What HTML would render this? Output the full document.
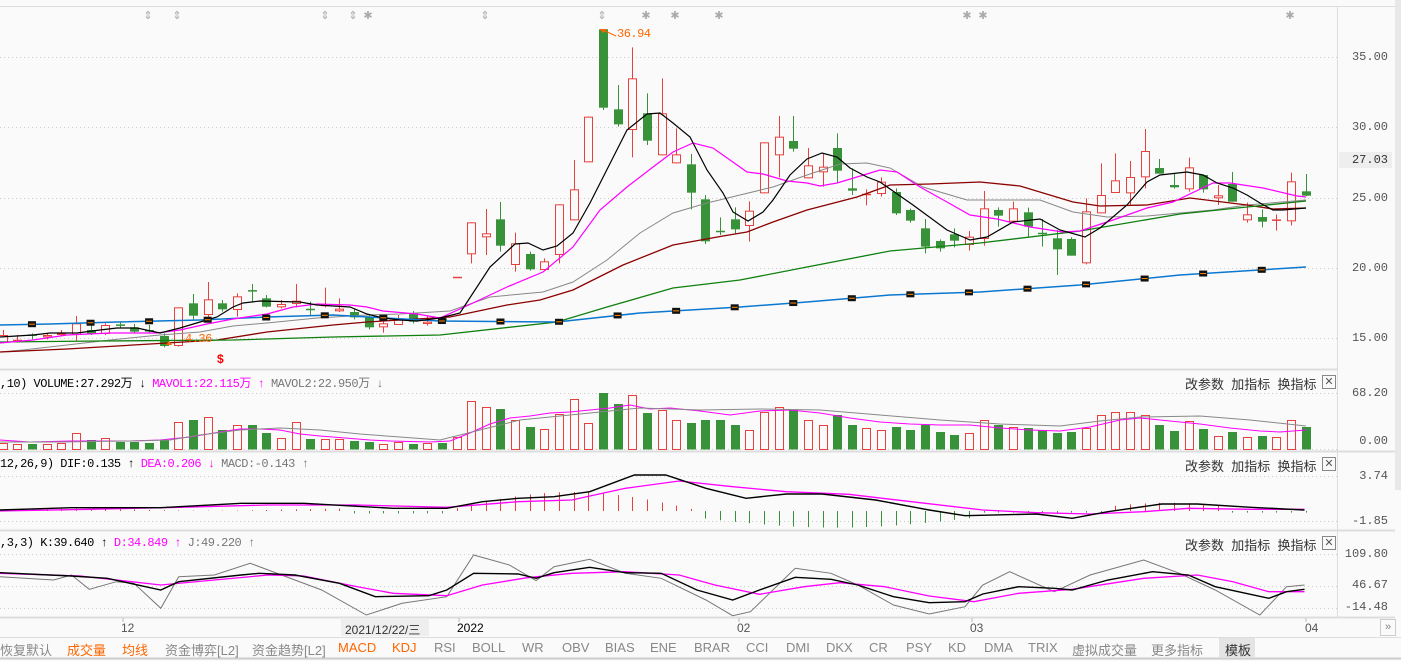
<!DOCTYPE html>
<html><head><meta charset="utf-8"><style>
html,body{margin:0;padding:0;background:#fafafa;width:1401px;height:661px;overflow:hidden;font-family:"Liberation Sans","Noto Sans CJK SC",sans-serif}
#c{position:absolute;left:0;top:0}
.t{position:absolute;white-space:nowrap;font-size:12px}
.mono{font-family:"Liberation Mono","Noto Sans CJK SC",monospace;font-size:12px;letter-spacing:-0.5px}
.btn{position:absolute;font-size:13px;color:#333;font-family:"Liberation Sans","Noto Sans CJK SC",sans-serif}
.x{position:absolute;width:12px;height:12px;border:1px solid #888;font-size:11px;line-height:12px;text-align:center;color:#555}
.ax{position:absolute;right:13px;font-family:"Liberation Mono",monospace;font-size:12px;color:#555;text-align:right}
.tab{position:absolute;top:640px;font-size:13px;color:#888}
</style></head><body>
<svg id="c" width="1401" height="661" xmlns="http://www.w3.org/2000/svg"></svg>

<div class="ax" style="top:50px">35.00</div>
<div class="ax" style="top:120px">30.00</div>
<div class="ax" style="top:191px">25.00</div>
<div class="ax" style="top:261px">20.00</div>
<div class="ax" style="top:331px">15.00</div>
<div style="position:absolute;left:1339px;top:152px;width:53px;height:16px;background:#eee"></div>
<div class="ax" style="top:153px;color:#333">27.03</div>
<div class="ax" style="top:386px">68.20</div>
<div class="ax" style="top:434px">0.00</div>
<div class="ax" style="top:469px">3.74</div>
<div class="ax" style="top:514px">-1.85</div>
<div class="ax" style="top:547px">109.80</div>
<div class="ax" style="top:578px">46.67</div>
<div class="ax" style="top:600px">-14.48</div>

<div class="t mono" style="left:0;top:374px;color:#000">,10) VOLUME:27.292万 ↓ <span style="color:#f0f">MAVOL1:22.115万 ↑</span> <span style="color:#777">MAVOL2:22.950万 ↓</span></div>
<div class="t mono" style="left:0;top:457px;color:#000">12,26,9) DIF:0.135 ↑ <span style="color:#f0f">DEA:0.206 ↓</span> <span style="color:#777">MACD:-0.143 ↑</span></div>
<div class="t mono" style="left:0;top:536px;color:#000">,3,3) K:39.640 ↑ <span style="color:#f0f">D:34.849 ↑</span> <span style="color:#777">J:49.220 ↑</span></div>

<div class="btn" style="left:1185px;top:374px">改参数&nbsp;&nbsp;加指标&nbsp;&nbsp;换指标</div><div class="x" style="left:1322px;top:375px">✕</div>
<div class="btn" style="left:1185px;top:456px">改参数&nbsp;&nbsp;加指标&nbsp;&nbsp;换指标</div><div class="x" style="left:1322px;top:457px">✕</div>
<div class="btn" style="left:1185px;top:535px">改参数&nbsp;&nbsp;加指标&nbsp;&nbsp;换指标</div><div class="x" style="left:1322px;top:536px">✕</div>

<div class="t mono" style="left:617px;top:27px;color:#f60;font-size:12px">36.94</div>
<div class="t mono" style="left:185px;top:332px;color:#f60">4.36</div>
<div class="t" style="left:217px;top:352px;color:#f00;font-weight:bold;font-size:12px">$</div>

<div class="t" style="left:121px;top:621px;color:#555">12</div>
<div style="position:absolute;left:341px;top:618px;width:88px;height:18px;background:#eee"></div>
<div class="t" style="left:345px;top:621px;color:#333">2021/12/22/三</div>
<div class="t" style="left:457px;top:621px;color:#000">2022</div>
<div class="t" style="left:737px;top:621px;color:#555">02</div>
<div class="t" style="left:970px;top:621px;color:#555">03</div>
<div class="t" style="left:1305px;top:621px;color:#555">04</div>
<div style="position:absolute;left:1380px;top:619px;width:14px;height:15px;border:1px solid #ccc;font-size:11px;color:#888;line-height:15px;text-align:center">»</div>

<div class="tab" style="left:0;color:#888">恢复默认</div>
<div class="tab" style="left:67px;color:#f60">成交量</div>
<div class="tab" style="left:122px;color:#f60">均线</div>
<div class="tab" style="left:165px">资金博弈[L2]</div>
<div class="tab" style="left:252px">资金趋势[L2]</div>
<div class="tab" style="left:338px;color:#f60">MACD</div>
<div class="tab" style="left:392px;color:#f60">KDJ</div>
<div class="tab" style="left:434px">RSI</div>
<div class="tab" style="left:472px">BOLL</div>
<div class="tab" style="left:522px">WR</div>
<div class="tab" style="left:562px">OBV</div>
<div class="tab" style="left:605px">BIAS</div>
<div class="tab" style="left:650px">ENE</div>
<div class="tab" style="left:694px">BRAR</div>
<div class="tab" style="left:746px">CCI</div>
<div class="tab" style="left:786px">DMI</div>
<div class="tab" style="left:826px">DKX</div>
<div class="tab" style="left:869px">CR</div>
<div class="tab" style="left:906px">PSY</div>
<div class="tab" style="left:948px">KD</div>
<div class="tab" style="left:984px">DMA</div>
<div class="tab" style="left:1028px">TRIX</div>
<div class="tab" style="left:1072px">虚拟成交量</div>
<div class="tab" style="left:1151px">更多指标</div>
<div style="position:absolute;left:1219px;top:638px;width:36px;height:19px;background:#e4e4e4"></div>
<div class="tab" style="left:1225px;color:#333">模板</div>

<script>
var S=document.getElementById('c'),NS='http://www.w3.org/2000/svg',h='';
function L(x1,y1,x2,y2,c,w,d){h+='<line x1="'+x1+'" y1="'+y1+'" x2="'+x2+'" y2="'+y2+'" stroke="'+c+'" stroke-width="'+(w||1)+'"'+(d?' stroke-dasharray="'+d+'"':'')+'/>';}
function R(x,y,w,ht,f,s){h+='<rect x="'+x+'" y="'+y+'" width="'+w+'" height="'+ht+'" fill="'+f+'"'+(s?' stroke="'+s+'"':'')+'/>';}
function P(a,c,w){h+='<polyline fill="none" stroke="'+c+'" stroke-width="'+(w||1)+'" points="'+a.join(' ')+'"/>';}
// frame
L(0,6.5,1401,6.5,'#ddd');
R(1395,0,6,490,'#e8e8e8');
L(1337.5,6,1337.5,617,'#ddd');
[57,127,198,268,338].forEach(function(y){L(0,y+.5,1337,y+.5,'#ccc',1,'1 3');});
L(0,369.5,1337,369.5,'#ddd',2);
L(0,393.5,1337,393.5,'#ccc',1,'1 3');L(0,449.5,1337,449.5,'#ccc',1,'1 3');
L(0,451.5,1395,451.5,'#ddd',2);
L(0,476.5,1337,476.5,'#ccc',1,'1 3');L(0,521.5,1337,521.5,'#ccc',1,'1 3');
L(0,530.5,1395,530.5,'#ddd',2);
L(0,554.5,1337,554.5,'#ccc',1,'1 3');L(0,586.5,1337,586.5,'#ccc',1,'1 3');L(0,608.5,1337,608.5,'#ccc',1,'1 3');
L(0,617.5,1395,617.5,'#ddd',2);
L(0,637.5,1401,637.5,'#ddd');L(0,658.5,1401,658.5,'#ccc',2);
[123,459,739,972,1306].forEach(function(x){L(x,618,x,622,'#bbb');});
// top markers
[148,177,325,353,485,602].forEach(function(x){h+='<text x="'+x+'" y="19" font-size="11" fill="#aaa" text-anchor="middle" font-family="Liberation Sans">⇕</text>';});
[368,646,675,719,967,983,1290].forEach(function(x){h+='<text x="'+x+'" y="19" font-size="11" fill="#aaa" text-anchor="middle" font-family="DejaVu Sans">✱</text>';});
// candles [type, top, bot, hi, lo] (main pixel coords)
var Z7=[['r',945,968,930,970],['r',960,963,945,968],['g',944,948,940,958],['r',945,952,940,958],['r',940,945,930,948],['r',910,945,888,962],['g',930,942,915,945],['r',915,942,910,945],['g',914,916,905,925],['g',922,935,912,940],['g',930,935,915,940],['g',948,978,940,982],['r',862,978,862,980],['g',850,887,822,898],['r',838,885,786,905],['g',850,868,840,875],['r',829,870,820,890],['g',811,814,792,845],['g',835,860,825,862],['r',852,862,840,865],['r',842,852,792,862],['g',867,869,845,885],['r',855,858,803,862],['r',866,874,835,876],['g',876,892,868,898],['g',892,922,885,928],['r',910,922,905,938],['r',898,915,885,915],['g',880,905,873,910],['r',905,912,887,917],['g',895,902,890,908]];
var Z8=[['r',771,773,771,773],['r',607,703,607,730],['r',640,652,567,705],['g',598,677,546,695],['r',670,735,638,755],['g',702,748,695,752],['r',724,750,715,752],['r',553,705,553,730],['r',508,601,420,601],['r',290,427,290,427],['g',28,263,28,270],['g',268,313,195,320],['r',175,330,82,412],['g',280,362,220,375],['r',280,406,175,406],['r',403,430,325,430],['g',433,518,402,568],['g',538,664,525,672],['g',633,636,592,645],['g',598,628,562,640],['r',572,618,544,665],['r',367,520,367,520],['r',350,406,288,472],['g',363,386,288,395],['r',436,475,384,475],['r',440,457,400,500],['g',384,452,340,490],['g',505,512,445,525],['r',522,525,508,556],['r',485,522,472,530]];
var Z9=[['g',516,580,505,585],['g',570,602,566,608],['g',625,680,597,700],['g',663,685,658,695],['g',643,662,625,682],['r',650,675,633,692],['r',565,657,513,677],['g',570,587,562,620],['r',565,605,545,608],['g',577,620,563,650],['g',639,641,597,680],['g',655,688,630,765],['g',657,707,652,707],['r',574,730,535,733],['r',525,580,430,580],['r',481,519,400,519],['r',471,520,423,555],['r',393,472,327,505],['g',444,461,417,461],['g',495,502,462,506],['r',442,508,413,515],['g',465,508,463,518],['r',526,535,495,555],['g',492,545,456,545],['r',583,601,548,608],['g',591,605,568,622],['r',599,601,583,632],['r',484,604,458,616],['g',514,527,462,528]];
var C=[];Z7.concat(Z8,Z9).forEach(function(a){C.push([a[0],20+a[1]/3,20+a[2]/3,20+a[3]/3,20+a[4]/3]);});
var vol=[443,444,444,444,443,433,440,438,442,442,443,440,422,420,417,430,425,425,433,438,422,439,439,439,441,442,444,442,444,443,443,437,401,407,409,420,427,429,414,399,423,393,404,395,413,410,420,423,420,420,425,430,412,407,410,420,425,415,425,428,430,427,430,425,432,435,433,420,425,427,428,430,433,432,428,415,412,412,415,425,431,421,429,436,432,437,436,437,420,427];
function X(i){return 2.7+14.64*i;}
C.forEach(function(c,i){var x=Math.round(X(i)),col=c[0]=='r'?'#e8403c':'#37923a';
 L(x+.5,c[3],x+.5,c[4],col);
 var t=c[1],b=c[2];if(b-t<1.5){L(x-4,t+.5,x+5,t+.5,col,1.5);}
 else if(c[0]=='r'){R(x-3.5,t+.5,8,b-t-1,'#fafafa',col);} else R(x-4,t,9,b-t,col);
 var v=vol[i]||440;
 if(c[0]=='r')R(x-3.5,v+.5,8,449-v,'none',col);else R(x-4,v,9,449.5-v,col);
});
// MAs
P(['0,352','23,350','67,345','110,340','160,335','200,332','233,326','267,323','317,318','367,315','400,314','450,311','490,297','543,292','573,282','607,260','640,233','673,213','707,203','740,195','773,187','807,175','840,164','867,163','890,168','923,187','967,200','997,200','1040,200','1073,212','1107,217','1147,216','1180,213','1213,210','1247,205','1306,200'],'#888');
P(['0,352','67,349','117,346','167,343','217,340','267,332','333,325','367,322','400,320','450,317','507,305','540,300','573,290','623,265','673,245','723,236','747,232','773,222','807,210','857,197','890,185','930,184','980,182','1020,186','1073,202','1100,206','1147,205','1190,198','1247,205','1273,209','1306,208'],'#8b0000',1.3);
P(['0,342','100,341','233,340','333,337','440,335','557,322','607,307','673,288','740,280','807,267','890,251','980,243','1080,231','1180,214','1247,207','1306,201'],'#108010',1.3);
P(['0,325','50,324','117,322','200,320','267,317','333,315','440,321','557,322','640,313','740,307','807,302','890,295','980,292','1080,285','1180,275','1306,267'],'#0a78d0',1.5);
P(['0,343','33,340','67,335','110,333','157,333','180,330','207,324','233,319','267,314','293,307','317,304','350,305','367,307','383,311','417,314','440,318','473,303','507,287','543,272','573,247','600,210','627,187','653,167','673,152','693,143','713,148','730,160','747,172','763,174','787,181','807,183','820,186','837,183','857,177','880,170','897,172','920,187','947,202','970,215','997,219','1030,227','1063,232','1080,231','1113,220','1147,208','1173,202','1213,183','1230,183','1263,188','1297,196','1306,197'],'#f0f',1.2);
P(['0,337','33,335','50,333','77,333','100,330','117,328','137,328','160,333','180,328','200,322','217,317','233,307','243,303','260,301','300,302','317,305','350,307','367,314','383,318','400,320','417,321','440,318','460,313','490,267','515,244','528,243','543,250','557,246','573,233','590,203','627,130','647,114','660,113','673,123','690,137','707,170','723,193','733,212','748,221','763,212','773,200','790,175','807,159','822,153','837,157','850,168','867,177','880,182','913,205','947,230','970,240','987,237','1013,222','1040,219','1060,230','1085,237','1100,228','1127,205','1147,182','1160,175','1187,172','1203,175','1217,183','1233,188','1247,195','1260,203','1273,210','1283,210','1306,208'],'#000',1.2);
// markers on blue line
function blueY(x){var p=[[0,325],[200,320],[333,315],[440,321],[557,322],[640,313],[740,307],[807,302],[890,295],[980,292],[1080,285],[1180,275],[1306,267]];for(var k=1;k<p.length;k++)if(x<=p[k][0]){var a=p[k-1],b=p[k];return a[1]+(b[1]-a[1])*(x-a[0])/(b[0]-a[0]);}return 267;}
for(var i=2;i<90;i+=4){var x=X(i);var y=blueY(x);R(x-4,y-3,8,6,'#111');L(x-3,y,x+3,y,'#f80');}
// 36.94 arrow
L(603,30,616,36,'#f60');h+='<polygon points="600,29 607,29 603,33" fill="#f60"/>';
h+='<polygon points="166,345 172,345 169,341" fill="#f60"/>';
// volume MA
P(['0,440','30,442','70,441','100,441','130,441','160,440','190,437','220,432','240,429','260,429','280,430','300,434','320,436','345,438','370,440','390,441','430,442','450,441','470,433','490,424','510,418','530,416','550,413','570,412','590,410','610,408','630,405','650,409','670,408','700,411','730,415','760,411','790,410','820,413','850,418','880,422','910,424','940,425','970,425','1000,428','1030,430','1060,431','1090,427','1120,420','1140,418','1170,421','1200,424','1230,428','1260,431','1280,432','1306,430'],'#f0f');
P(['0,442','60,442','130,441','170,440','200,435','240,430','280,428','320,430','360,434','400,437','440,440','480,430','520,420','560,416','600,412','640,408','700,410','760,409','820,410','880,415','940,420','1000,424','1060,426','1100,421','1140,417','1200,416','1250,420','1306,426'],'#888');
// MACD
function T(a){return a.map(function(p){return (p[0]*0.8935).toFixed(1)+','+(450+p[1]/3).toFixed(1);});}
var hz=[];for(var i=0;i<90;i++){var x=X(i),zx=x/0.8935,v;
 if(zx<390)v=-(4+3*Math.sin(i/3));else if(zx<500)v=7;else if(zx<780)v=-Math.max(2,55*Math.sin((zx-500)/280*Math.PI))-2;else if(zx<1090)v=20+30*Math.sin((zx-780)/310*Math.PI);else if(zx<1245)v=5;else if(zx<1370)v=-15-10*Math.sin((zx-1245)/125*Math.PI);else v=5;
 var y0=511,y1=511+v/3;L(Math.round(x)+.5,y0,Math.round(x)+.5,y1,v<0?'#e8403c':'#37923a');}
P(T([[0,183],[100,178],[200,172],[300,165],[400,165],[500,172],[580,155],[640,150],[700,115],[760,93],[820,110],[880,125],[950,133],[1020,155],[1100,180],[1160,188],[1220,192],[1280,185],[1330,175],[1400,178],[1460,178]]),'#f0f',1.3);
P(T([[0,180],[80,173],[180,173],[270,160],[340,160],[440,175],[500,175],[540,155],[580,145],[620,140],[660,125],[710,75],[745,75],[790,115],[835,145],[880,132],[920,132],[980,150],[1040,180],[1080,197],[1160,192],[1200,205],[1240,185],[1300,162],[1340,162],[1400,172],[1460,180]]),'#000',1.4);
// KDJ
P(T([[0,380],[60,390],[80,375],[100,418],[130,395],[150,400],[180,475],[200,380],[240,375],[280,340],[330,390],[360,420],[410,495],[450,460],[500,440],[530,315],[570,345],[600,392],[620,350],[660,328],[700,370],[740,385],[790,450],[820,497],[840,485],[890,355],[930,370],[960,405],[1000,465],[1040,492],[1080,470],[1100,405],[1130,365],[1180,425],[1220,375],[1280,330],[1320,370],[1360,420],[1410,495],[1440,410],[1460,405]]),'#777');
P(T([[0,370],[90,378],[180,405],[240,390],[300,375],[340,378],[400,410],[440,430],[500,437],[540,405],[590,383],[640,370],[700,365],[760,375],[800,405],[850,433],[900,410],[940,398],[990,410],[1040,438],[1090,455],[1140,430],[1200,418],[1280,385],[1340,375],[1380,395],[1420,425],[1460,425]]),'#f0f',1.3);
P(T([[0,368],[80,378],[120,385],[180,420],[200,395],[270,375],[290,370],[330,375],[380,400],[420,440],[480,437],[500,420],[530,370],[580,372],[600,385],[620,368],[660,352],[700,368],[740,370],[780,420],[820,450],[850,420],[890,382],[930,388],[960,405],[1000,440],[1040,458],[1080,455],[1100,432],[1140,410],[1180,415],[1200,420],[1240,390],[1290,365],[1330,375],[1360,410],[1420,445],[1440,425],[1460,418]]),'#000',1.4);
S.innerHTML=h;
</script>
</body></html>
